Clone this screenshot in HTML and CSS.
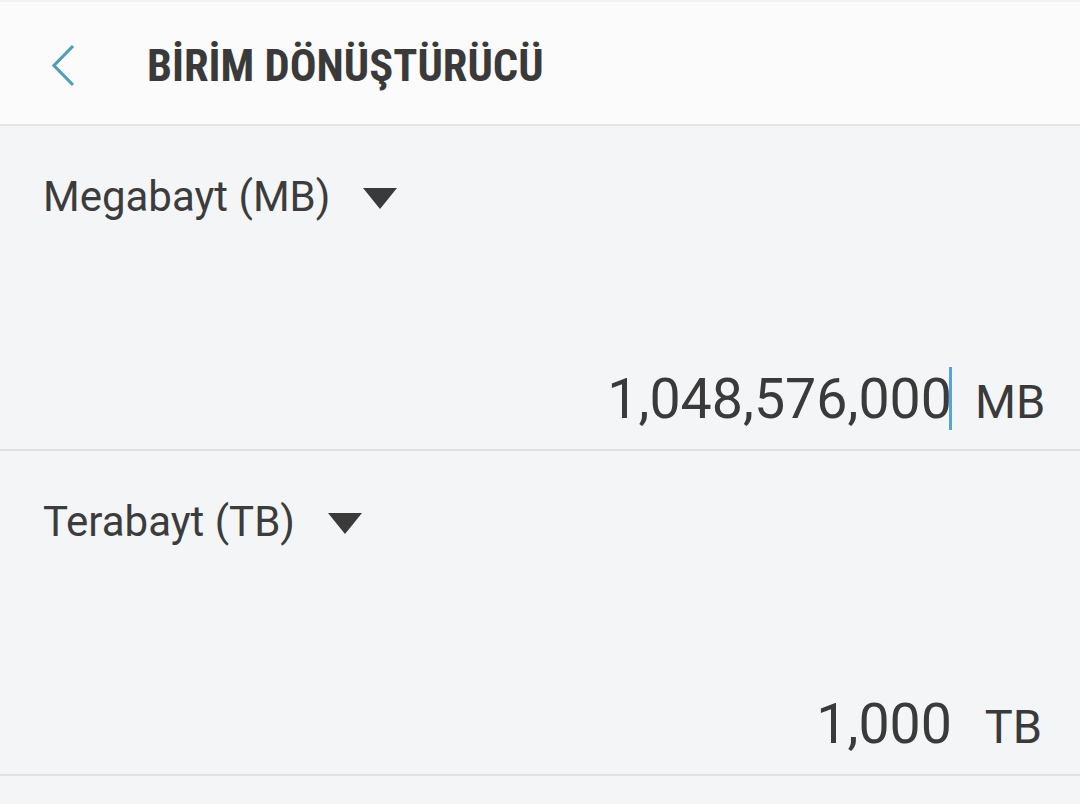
FILE: index.html
```html
<!DOCTYPE html>
<html lang="tr">
<head>
<meta charset="utf-8">
<link rel="stylesheet" href="styles.css">
</head>
<body>
<header class="appbar">
  <button class="back" aria-label="Geri">
    <svg width="24" height="44" viewBox="0 0 24 44"><polyline points="21,2 2,21.5 21,41" fill="none" stroke="#4f9fb7" stroke-width="3.2"/></svg>
  </button>
  <h1 class="title">BİRİM DÖNÜŞTÜRÜCÜ</h1>
</header>
<main>
  <section class="unit-row">
    <div class="picker"><span class="picker-label">Megabayt (MB)</span><span class="caret"></span></div>
    <div class="value-line">
      <span class="value">1,048,576,000<span class="cursor"></span></span>
      <span class="unit">MB</span>
    </div>
  </section>
  <section class="unit-row">
    <div class="picker"><span class="picker-label">Terabayt (TB)</span><span class="caret"></span></div>
    <div class="value-line">
      <span class="value">1,000</span>
      <span class="unit">TB</span>
    </div>
  </section>
</main>
</body>
</html>
```
FILE: styles.css
```css
* { box-sizing: border-box; }
html, body { margin: 0; padding: 0; }
body {
  width: 1080px;
  height: 804px;
  overflow: hidden;
  background: #f4f5f7;
  font-family: Roboto, "Noto Sans", sans-serif;
  color: #3c3c3c;
}
.appbar {
  height: 126px;
  background: #fbfbfb;
  border-top: 2px solid #f1f1f1;
  border-bottom: 2px solid #e4e4e4;
  display: flex;
  align-items: center;
  padding-left: 52px;
}
.back {
  background: none;
  border: 0;
  padding: 0;
  width: 24px;
  height: 44px;
  display: flex;
  margin-top: 6px;
}
.title {
  margin: 6px 0 0 71px;
  font-family: "Roboto Condensed", "Liberation Sans Narrow", "DejaVu Sans Condensed", Roboto, sans-serif;
  font-stretch: condensed;
  font-weight: 700;
  font-size: 44.5px;
  color: #3a3a3a;
  letter-spacing: 0;
}
.unit-row {
  height: 325px;
  border-bottom: 2px solid #e0e1e3;
  display: flex;
  flex-direction: column;
  justify-content: space-between;
  padding: 0 38px 0 43px;
}
.picker {
  display: flex;
  align-items: center;
  margin-top: 44px;
}
.picker-label {
  font-size: 42px;
  line-height: 54px;
  color: #3c3c3c;
}
.caret {
  width: 0;
  height: 0;
  border-left: 17px solid transparent;
  border-right: 17px solid transparent;
  border-top: 21px solid #3a3a3a;
  margin-left: 33px;
  margin-top: 2px;
}
.value-line {
  display: flex;
  justify-content: flex-end;
  align-items: baseline;
  margin-bottom: 14px;
}
.value {
  font-size: 55.5px;
  line-height: 70px;
  color: #3a3a3a;
}
.cursor {
  display: inline-block;
  width: 3px;
  height: 63px;
  margin-left: -3px;
  background: #5aa3d6;
  vertical-align: -12px;
}
.unit {
  width: 67px;
  margin-left: 23px;
  text-align: right;
  font-size: 47px;
  color: #3a3a3a;
}
```
